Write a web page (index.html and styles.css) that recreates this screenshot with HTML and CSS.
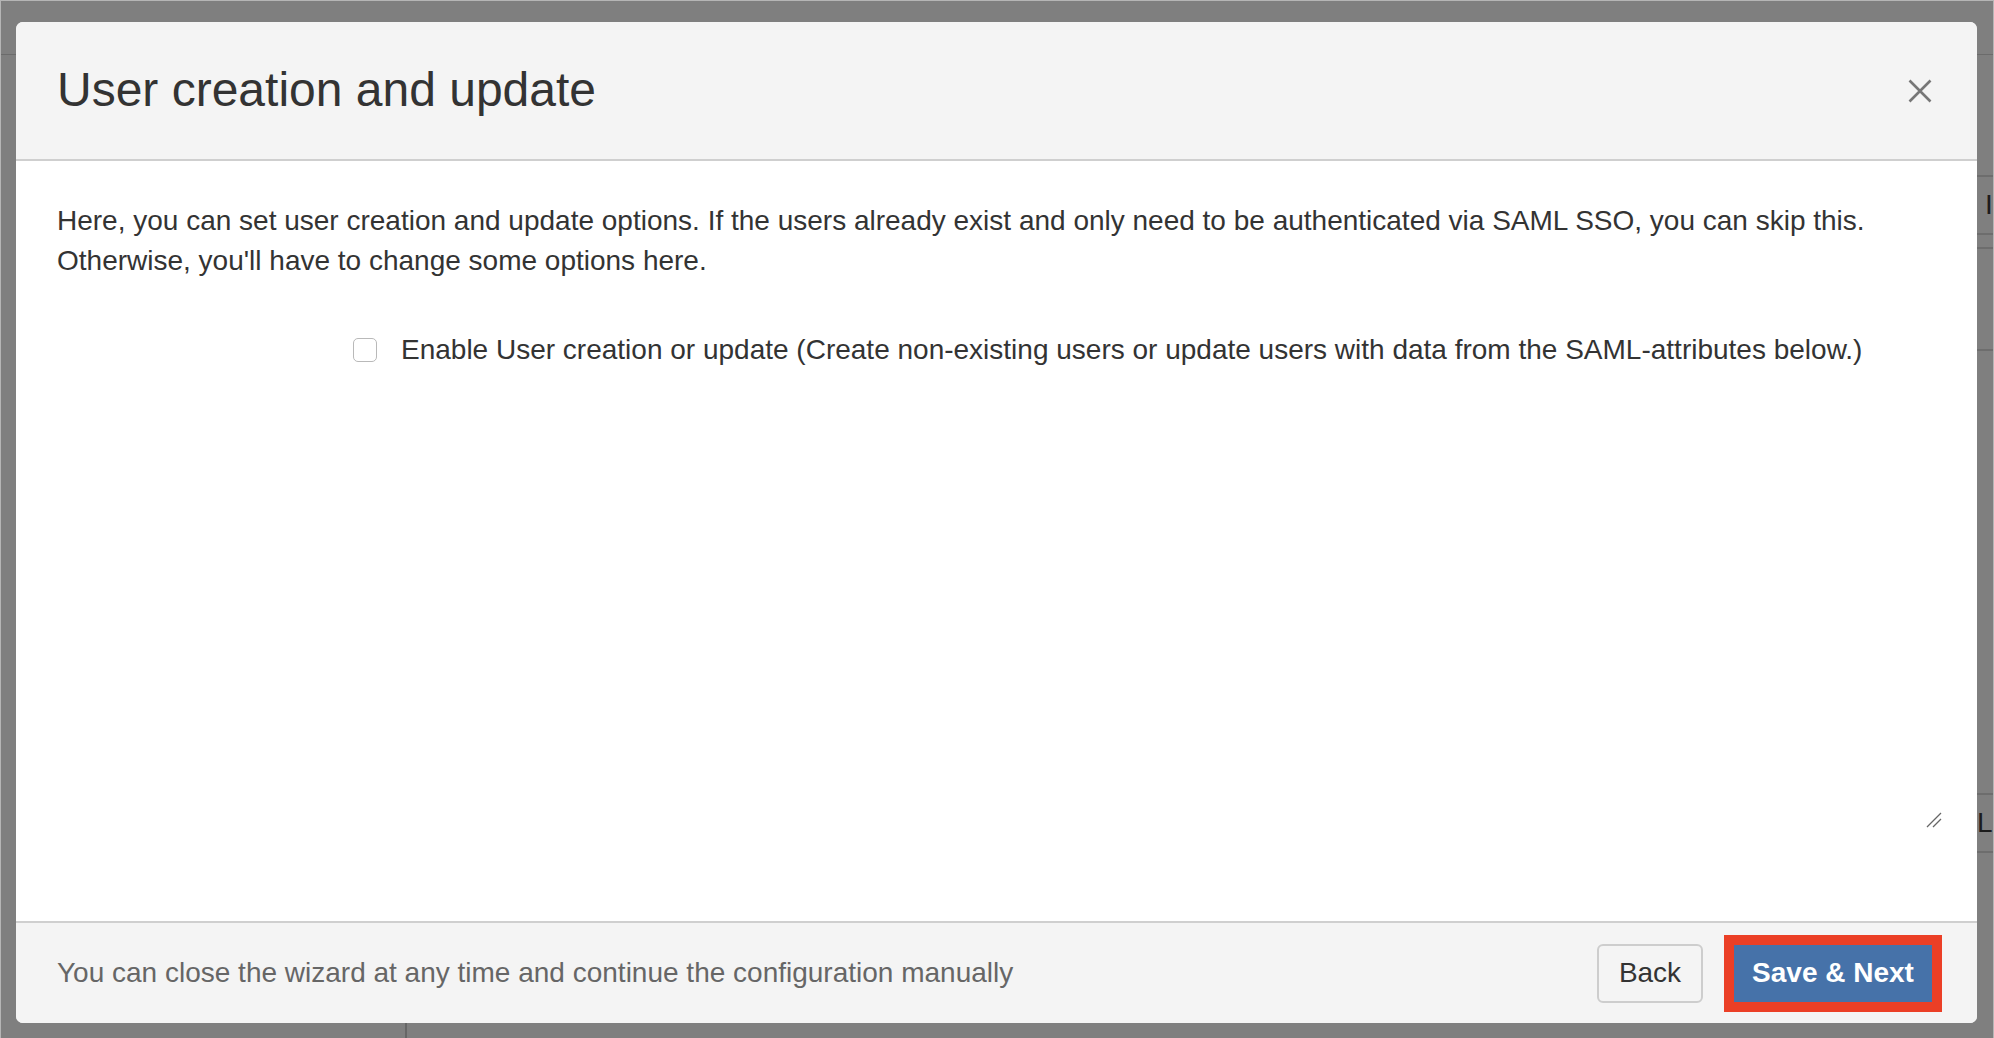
FILE: index.html
```html
<!DOCTYPE html>
<html lang="en">
<head>
<meta charset="utf-8">
<title>User creation and update</title>
<link rel="stylesheet" href="styles.css">
</head>
<body>
<div class="page">
  <div class="page-topline"></div>
  <div class="page-right">
    <div class="pr-row pr-row-a"></div>
    <div class="pr-row pr-row-b"><span class="pr-text">Id</span></div>
    <div class="pr-row pr-row-c"></div>
    <div class="pr-row pr-row-d"></div>
    <div class="pr-row pr-row-e"></div>
    <div class="pr-row pr-row-f"><span class="pr-text pr-text-f">Lo</span></div>
  </div>
  <div class="page-bottom-divider"></div>
</div>

<div class="modal">
  <div class="modal-header">
    <h4 class="modal-title">User creation and update</h4>
    <button class="close" aria-label="Close">
      <svg width="24" height="24" viewBox="0 0 24 24"><path d="M1.5 1.5 L22.5 22.5 M22.5 1.5 L1.5 22.5" stroke="#777" stroke-width="2.6" fill="none"/></svg>
    </button>
  </div>
  <div class="modal-body">
    <p class="intro">Here, you can set user creation and update options. If the users already exist and only need to be authenticated via SAML SSO, you can skip this.<br>Otherwise, you'll have to change some options here.</p>
    <label class="check-row">
      <span class="checkbox"></span>
      <span class="check-label">Enable User creation or update (Create non-existing users or update users with data from the SAML-attributes below.)</span>
    </label>
    <div class="resize-handle">
      <svg width="16" height="16" viewBox="0 0 16 16"><path d="M1 15 L15 1 M7 15 L15 7" stroke="#666" stroke-width="1.3" fill="none"/></svg>
    </div>
  </div>
  <div class="modal-footer">
    <span class="footer-note">You can close the wizard at any time and continue the configuration manually</span>
    <div class="footer-buttons">
      <button class="btn btn-default">Back</button>
      <span class="highlight"><button class="btn btn-primary">Save &amp; Next</button></span>
    </div>
  </div>
</div>
</body>
</html>
```

FILE: styles.css
```css
html, body {
  margin: 0;
  padding: 0;
}
body {
  width: 1994px;
  height: 1038px;
  overflow: hidden;
  background: #7f7f7f;
  font-family: "Liberation Sans", Arial, Helvetica, sans-serif;
  color: #333;
  position: relative;
  box-sizing: border-box;
  border-top: 1px solid #b5b5b5;
  border-left: 1px solid #b5b5b5;
  border-right: 1px solid #b5b5b5;
}
.page {
  height: 100%;
  position: relative;
  padding-top: 53px;
  box-sizing: border-box;
}
.page-topline {
  height: 1px;
  background: #6b6b6b;
}
.page-right {
  position: absolute;
  left: 1975px;
  top: 0;
  width: 18px;
  overflow: hidden;
}
.pr-row {
  border-bottom: 2px solid #6d6d6d;
}
.pr-row-a { height: 174px; }
.pr-row-b { height: 56px; display: flex; align-items: center; }
.pr-row-c { height: 12px; }
.pr-row-d { height: 100px; }
.pr-row-e { height: 442px; }
.pr-row-f { height: 56px; display: flex; align-items: center; }
.pr-text {
  font-size: 28px;
  color: #1c1c1c;
  padding-left: 9px;
  white-space: nowrap;
}
.pr-text-f { padding-left: 1px; }
.page-bottom-divider {
  position: absolute;
  left: 404px;
  top: 1022px;
  width: 2px;
  height: 16px;
  background: #666;
}

.modal {
  position: absolute;
  left: 15px;
  top: 21px;
  width: 1961px;
  height: 1001px;
  background: #fff;
  border-radius: 7px;
  display: flex;
  flex-direction: column;
  overflow: hidden;
}
.modal-header {
  background: #f4f4f4;
  border-bottom: 2px solid #cfcfcf;
  height: 137px;
  flex: none;
  box-sizing: content-box;
  display: flex;
  align-items: center;
  justify-content: space-between;
  padding: 0 45px 0 41px;
}
.modal-title {
  margin: 0;
  font-size: 48px;
  font-weight: normal;
  color: #333;
  line-height: 1;
  padding-bottom: 1px;
}
.close {
  border: 0;
  background: transparent;
  padding: 0;
  width: 24px;
  height: 24px;
  display: block;
}
.close svg { display: block; }
.modal-body {
  flex: 1;
  position: relative;
  padding: 0 41px;
}
.intro {
  margin: 0;
  padding-top: 40px;
  font-size: 28px;
  line-height: 40px;
}
.check-row {
  display: flex;
  align-items: center;
  margin-top: 49px;
  margin-left: 296px;
  font-size: 28px;
  line-height: 40px;
}
.checkbox {
  width: 22px;
  height: 22px;
  border: 1px solid #b9b9b9;
  border-radius: 5px;
  background: #fff;
  margin-right: 24px;
  flex: none;
}
.resize-handle {
  position: absolute;
  right: 35px;
  bottom: 93px;
  width: 16px;
  height: 16px;
}
.resize-handle svg { display: block; }
.modal-footer {
  background: #f4f4f4;
  border-top: 2px solid #cfcfcf;
  height: 102px;
  flex: none;
  box-sizing: border-box;
  display: flex;
  align-items: center;
  justify-content: space-between;
  padding: 0 35px 0 41px;
}
.footer-note {
  font-size: 28px;
  color: #666;
}
.footer-buttons {
  display: flex;
  align-items: center;
  gap: 21px;
}
.btn {
  font-family: "Liberation Sans", Arial, Helvetica, sans-serif;
  font-size: 28px;
  line-height: 1;
  height: 59px;
  box-sizing: border-box;
  cursor: pointer;
  padding: 0;
}
.btn-default {
  width: 106px;
  background: #f4f4f4;
  color: #333;
  border: 2px solid #cdcdcd;
  border-radius: 6px;
}
.highlight {
  display: block;
  border: 10px solid #eb3f26;
}
.btn-primary {
  display: block;
  width: 198px;
  height: 57px;
  background: #4672a9;
  color: #fff;
  font-weight: bold;
  border: 0;
  border-radius: 0;
}
```
